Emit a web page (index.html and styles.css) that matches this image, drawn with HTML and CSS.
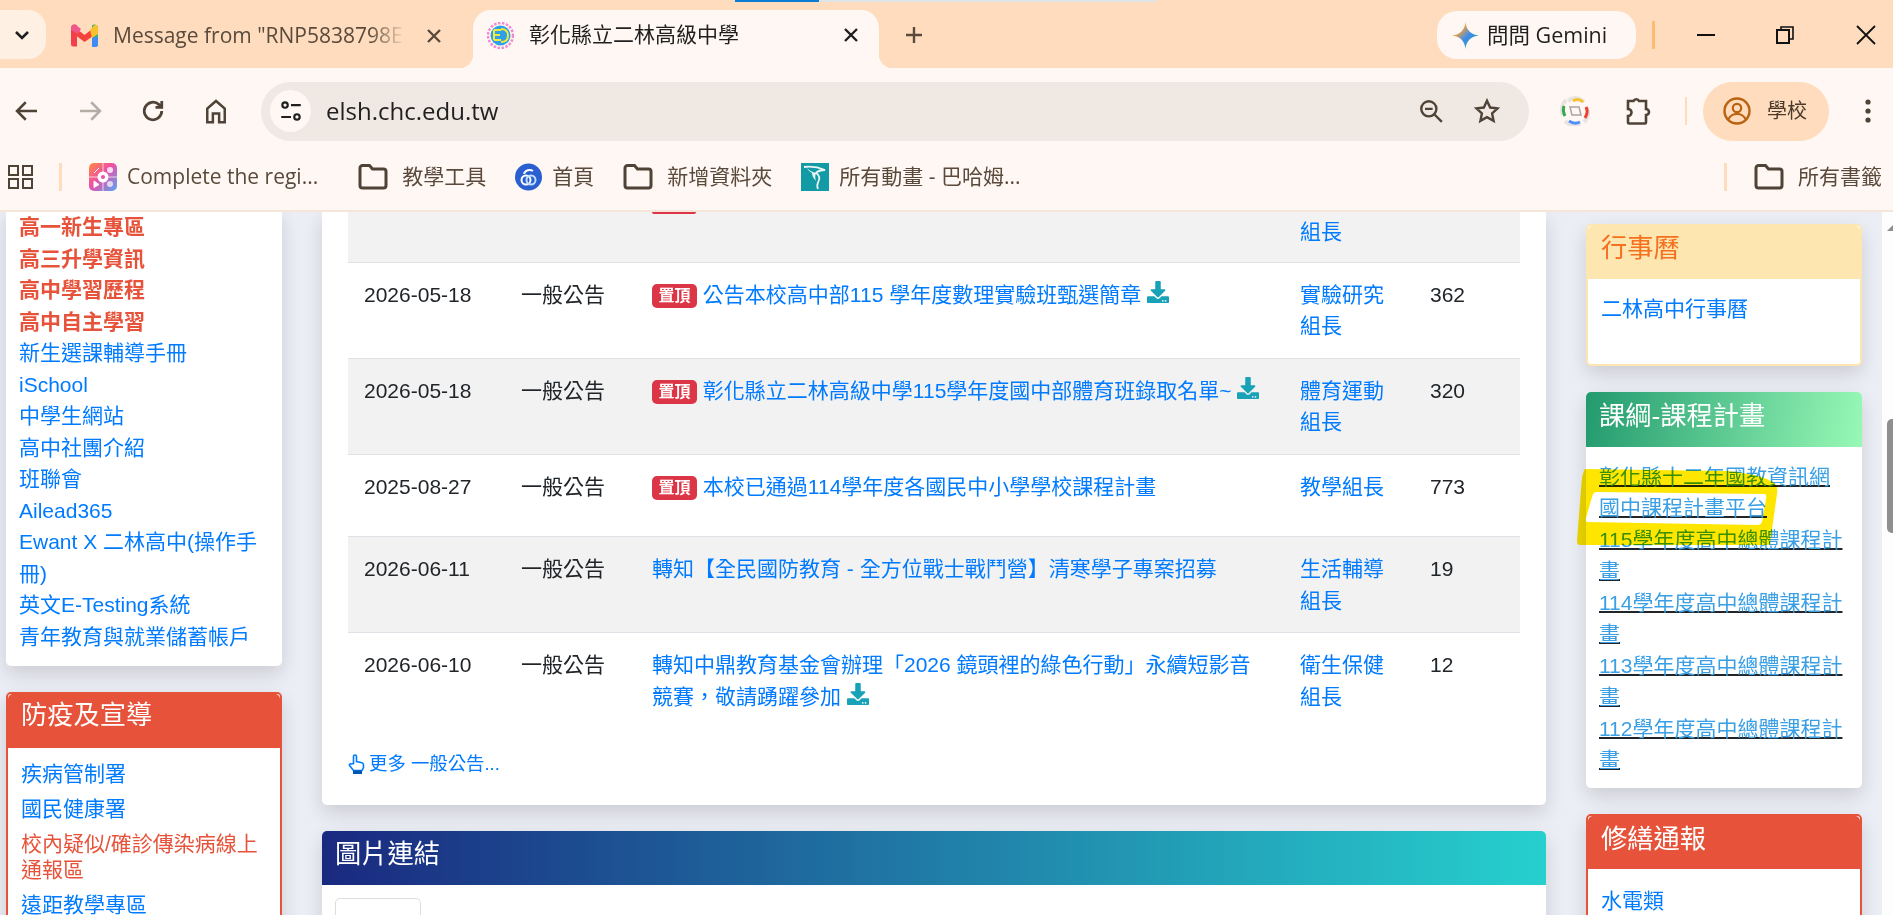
FILE: index.html
```html
<!DOCTYPE html>
<html lang="zh-Hant">
<head>
    <meta charset="UTF-8">
    <title>彰化縣立二林高級中學</title>
    <link rel="stylesheet" href="styles.css">
</head>
<body>
    <svg class="defs" width="0" height="0">
        <defs>
            <symbol id="dl" viewBox="0 0 512 512">
                <path d="M216 0h80c13.3 0 24 10.7 24 24v168h87.7c17.8 0 26.7 21.5 14.1 34.1L269.7 378.3c-7.5 7.5-19.8 7.5-27.3 0L90.1 226.1c-12.6-12.6-3.7-34.1 14.1-34.1H192V24c0-13.3 10.7-24 24-24zm296 376v112c0 13.3-10.7 24-24 24H24c-13.3 0-24-10.7-24-24V376c0-13.3 10.7-24 24-24h146.7l49 49c20.1 20.1 52.5 20.1 72.6 0l49-49H488c13.3 0 24 10.7 24 24zm-124 88c0-11-9-20-20-20s-20 9-20 20 9 20 20 20 20-9 20-20zm64 0c0-11-9-20-20-20s-20 9-20 20 9 20 20 20 20-9 20-20z"/>
            </symbol>
            <symbol id="folder" viewBox="0 0 30 26">
                <path d="M2 4a2.500 2.500 0 0 1 2.500-2.500h7l3 3.500h11a2.500 2.500 0 0 1 2.500 2.500v14a2.500 2.500 0 0 1-2.500 2.500h-21a2.500 2.500 0 0 1-2.500-2.500z" fill="none" stroke="currentColor" stroke-width="3"/>
            </symbol>
            <linearGradient id="gem" x1="0" y1="0" x2="1" y2="1">
                <stop offset="0" stop-color="#e8453c"/>
                <stop offset=".3" stop-color="#f2a03c"/>
                <stop offset=".55" stop-color="#3b8cf0"/>
                <stop offset="1" stop-color="#34a853"/>
            </linearGradient>
            <linearGradient id="cpl" x1="0" y1="0" x2="1" y2="1">
                <stop offset="0" stop-color="#ff8a3c"/>
                <stop offset=".45" stop-color="#ef4fa6"/>
                <stop offset="1" stop-color="#52a8f5"/>
            </linearGradient>
        </defs>
    </svg>

    <div class="capture-strip"><span class="strip-blue"></span><span class="strip-grey"></span></div>

    <header class="chrome">
        <div class="tabstrip">
            <div class="tab-menu">
                <svg width="20" height="20" viewBox="0 0 20 20"><path d="M4 7l6 6 6-6" fill="none" stroke="#1f1f1f" stroke-width="2.600"/></svg>
            </div>
            <div class="tab">
                <svg class="tab-gmail" width="29" height="25" viewBox="0 0 29 25">
                    <path d="M1 5a3.500 3.500 0 0 1 6-2.500v21H3.500A2.500 2.500 0 0 1 1 21z" fill="#f13f4c"/>
                    <path d="M22 2.500A3.500 3.500 0 0 1 28 5v16a2.500 2.500 0 0 1-2.500 2.500H22z" fill="#37b36b"/>
                    <path d="M22 24h3.500a2.500 2.500 0 0 0 2.500-2.500V14h-6z" fill="#3f8cf5"/>
                    <path d="M2 2l12.500 10L27 2l-1 9-11.500 8L4 11z" fill="#f4433c"/>
                    <path d="M20 7l4-4.500c2-1.500 4-.5 4 2.500v6l-6 4z" fill="#fbc02d"/>
                    <path d="M1 5c0-3 2.500-4.500 5-3l5 4-3 5-7-4z" fill="#f0568c"/>
                </svg>
                <span class="tab-title fade">Message from "RNP5838798E</span>
                <svg class="tab-close" width="18" height="18" viewBox="0 0 18 18"><path d="M3 3l12 12M15 3L3 15" stroke="#5a4a3c" stroke-width="2.400"/></svg>
            </div>
            <div class="tab tab-active">
                <svg width="27" height="27" viewBox="0 0 27 27">
                    <circle cx="13.500" cy="13.500" r="12.500" fill="none" stroke="#f08ad0" stroke-width="2.500" stroke-dasharray="2.500 1.500"/>
                    <circle cx="13.500" cy="13.500" r="10" fill="#2f9fe8"/>
                    <path d="M7 8h7M7 13h6M7 18h7M7 8v10M14 7c5 0 7 3 7 6.500S19 20 14 20" fill="none" stroke="#f2ea3a" stroke-width="2"/>
                </svg>
                <span class="tab-title tab-title-active">彰化縣立二林高級中學</span>
                <svg class="tab-close" width="18" height="18" viewBox="0 0 18 18"><path d="M3 3l12 12M15 3L3 15" stroke="#1f1f1f" stroke-width="2.400"/></svg>
            </div>
            <svg class="tab-plus" width="22" height="22" viewBox="0 0 22 22"><path d="M11 3v16M3 11h16" stroke="#5a4a3c" stroke-width="2.400"/></svg>
            <div class="gemini">
                <svg width="27" height="27" viewBox="0 0 24 24"><path d="M12 0C12.500 7 17 11.500 24 12 17 12.500 12.500 17 12 24 11.500 17 7 12.500 0 12 7 11.500 11.500 7 12 0z" fill="url(#gem)"/></svg>
                <span>問問 Gemini</span>
            </div>
            <span class="strip-divider"></span>
            <svg class="win-min" width="18" height="18" viewBox="0 0 18 18"><path d="M0 9h18" stroke="#111" stroke-width="2"/></svg>
            <svg class="win-max" width="18" height="18" viewBox="0 0 18 18"><rect x="1" y="4" width="12" height="13" fill="none" stroke="#111" stroke-width="2"/><path d="M5 4V1h12v12h-4" fill="none" stroke="#111" stroke-width="1.600"/></svg>
            <svg class="win-close" width="20" height="20" viewBox="0 0 20 20"><path d="M1 1l18 18M19 1L1 19" stroke="#111" stroke-width="1.800"/></svg>
        </div>

        <div class="toolbar">
            <div class="nav">
                <svg width="30" height="30" viewBox="0 0 24 24"><path d="M20 12H5M11 5l-7 7 7 7" fill="none" stroke="#4f4337" stroke-width="2"/></svg>
                <svg width="30" height="30" viewBox="0 0 24 24"><path d="M4 12h15M13 5l7 7-7 7" fill="none" stroke="#b5aca5" stroke-width="2"/></svg>
                <svg width="30" height="30" viewBox="0 0 24 24"><path d="M19 12a7 7 0 1 1-2.200-5.100L19 9M19 4v5h-5" fill="none" stroke="#4f4337" stroke-width="2.200"/></svg>
                <svg width="30" height="30" viewBox="0 0 24 24"><path d="M5 21V10l7-6 7 6v11h-4.500v-7h-5v7z" fill="none" stroke="#4f4337" stroke-width="2"/></svg>
            </div>
            <div class="omnibox">
                <span class="site-info">
                    <svg width="26" height="26" viewBox="0 0 24 24"><circle cx="6.500" cy="6.500" r="2.500" fill="none" stroke="#1f1f1f" stroke-width="2"/><path d="M12 6.500h9M3 17.500h9" stroke="#1f1f1f" stroke-width="2"/><circle cx="17.500" cy="17.500" r="2.500" fill="none" stroke="#1f1f1f" stroke-width="2"/></svg>
                </span>
                <span class="url">elsh.chc.edu.tw</span>
                <svg class="omni-zoom" width="26" height="26" viewBox="0 0 24 24"><circle cx="10" cy="10" r="7" fill="none" stroke="#4f4337" stroke-width="2.200"/><path d="M6.500 10h7M15 15l7 7" stroke="#4f4337" stroke-width="2.200"/></svg>
                <svg class="omni-star" width="26" height="26" viewBox="0 0 24 24"><path d="M12 2.500l2.900 6.300 6.900.8-5.100 4.700 1.400 6.800-6.100-3.400-6.100 3.400 1.400-6.800L2.200 9.600l6.900-.8z" fill="none" stroke="#4f4337" stroke-width="2.200"/></svg>
            </div>
            <svg class="ext-wheel" width="30" height="30" viewBox="0 0 30 30">
                <path d="M8 5c5-4 11-4 16 1M27 12c2 5 1 10-3 14M20 28c-5 2-11 1-15-3M3 19C1 14 2 8 6 4" fill="none" stroke="#e6e3e0" stroke-width="4"/>
                <path d="M13 5c3-2 7-2 10 1" fill="none" stroke="#fbc02d" stroke-width="3"/>
                <path d="M26 11c2 4 1 8-1 11" fill="none" stroke="#ea4335" stroke-width="3"/>
                <path d="M20 26c-4 2-8 1-11-1" fill="none" stroke="#4f8ff7" stroke-width="3"/>
                <path d="M5 20c-2-4-2-7-1-10" fill="none" stroke="#34a853" stroke-width="3"/>
                <path d="M10 11h9l2 8H12z" fill="none" stroke="#a9a5a2" stroke-width="1.500"/>
            </svg>
            <svg class="ext-puzzle" width="28" height="30" viewBox="0 0 28 30"><path d="M3 5h5.500a3 3 0 0 1 5.500 0H21v8a3 3 0 0 1 0 6v7.500a1 1 0 0 1-1 1H4a1 1 0 0 1-1-1V20a3.500 3.500 0 0 0 0-7z" fill="none" stroke="#4f4337" stroke-width="2.600"/></svg>
            <span class="tool-divider"></span>
            <div class="profile">
                <svg width="28" height="28" viewBox="0 0 28 28"><circle cx="14" cy="14" r="12.500" fill="none" stroke="#b9620f" stroke-width="2.400"/><circle cx="14" cy="11" r="4.200" fill="none" stroke="#b9620f" stroke-width="2.200"/><path d="M5.500 22c2-4 5-5 8.500-5s6.500 1 8.500 5" fill="none" stroke="#b9620f" stroke-width="2.200"/></svg>
                <span>學校</span>
            </div>
            <svg class="tool-dots" width="6" height="24" viewBox="0 0 6 24"><circle cx="3" cy="3" r="2.600" fill="#4f4337"/><circle cx="3" cy="12" r="2.600" fill="#4f4337"/><circle cx="3" cy="21" r="2.600" fill="#4f4337"/></svg>
        </div>

        <div class="bookmarks">
            <svg class="bm-apps" width="25" height="24" viewBox="0 0 25 24"><path d="M1 1h9v9H1zM15 1h9v9h-9zM1 14h9v9H1zM15 14h9v9h-9z" fill="none" stroke="#4f4337" stroke-width="2"/></svg>
            <span class="bm-divider"></span>
            <a class="bm bm-first">
                <svg width="28" height="28" viewBox="0 0 28 28"><rect width="28" height="28" rx="5" fill="url(#cpl)"/><path d="M14 0v28M0 14h28" stroke="#fff" stroke-opacity=".7"/><circle cx="14" cy="14" r="5.500" fill="#fff"/><circle cx="14" cy="14" r="2" fill="#ef4fa6"/><circle cx="21" cy="7" r="3" fill="#fff" fill-opacity=".8"/><circle cx="21" cy="21" r="3" fill="#fff" fill-opacity=".7"/><path d="M5 10l5-5M5 18l5 3.500-5 3z" stroke="#fff" fill="#fff"/></svg>
                <span>Complete the regi...</span>
            </a>
            <a class="bm">
                <svg class="bm-folder" width="30" height="26"><use href="#folder"/></svg>
                <span>教學工具</span>
            </a>
            <a class="bm">
                <svg width="27" height="28" viewBox="0 0 27 28"><circle cx="13.500" cy="14" r="13.500" fill="#2a5fd0"/><circle cx="11" cy="17" r="4.500" fill="none" stroke="#fff" stroke-width="2"/><circle cx="16" cy="17" r="4.500" fill="none" stroke="#bfe0ff" stroke-width="2"/><path d="M9 11c1-4 6-5 9-3" fill="none" stroke="#fff" stroke-width="2"/></svg>
                <span>首頁</span>
            </a>
            <a class="bm">
                <svg class="bm-folder" width="30" height="26"><use href="#folder"/></svg>
                <span>新增資料夾</span>
            </a>
            <a class="bm">
                <svg width="28" height="28" viewBox="0 0 28 28"><rect width="28" height="28" fill="#129aa5"/><path d="M3 4c7-1 14 0 21 3-5 0-7 1-9 3 3 2 4 4 3 7-1 3-3 5-1 9" fill="none" stroke="#e9f6f5" stroke-width="1.800"/><path d="M6 5c3 3 5 4 9 5-1 3-1 5 0 8-3-3-4-6-4-8-2-1-4-3-5-5z" fill="#e9f6f5"/></svg>
                <span>所有動畫 - 巴哈姆...</span>
            </a>
            <span class="bm-divider bm-divider-end"></span>
            <a class="bm bm-all">
                <svg class="bm-folder" width="30" height="26"><use href="#folder"/></svg>
                <span>所有書籤</span>
            </a>
        </div>
    </header>

    <div class="viewport">
        <div class="page">
            <aside class="col">
                <section class="card card-list">
                    <ul class="link-list">
                        <li><a class="strong">高一新生專區</a></li>
                        <li><a class="strong">高三升學資訊</a></li>
                        <li><a class="strong">高中學習歷程</a></li>
                        <li><a class="strong">高中自主學習</a></li>
                        <li><a>新生選課輔導手冊</a></li>
                        <li><a>iSchool</a></li>
                        <li><a>中學生網站</a></li>
                        <li><a>高中社團介紹</a></li>
                        <li><a>班聯會</a></li>
                        <li><a>Ailead365</a></li>
                        <li><a>Ewant X 二林高中(操作手冊)</a></li>
                        <li><a>英文E-Testing系統</a></li>
                        <li><a>青年教育與就業儲蓄帳戶</a></li>
                    </ul>
                </section>
                <section class="card card-red">
                    <h4 class="card-head">防疫及宣導</h4>
                    <ul class="spaced-list">
                        <li><a>疾病管制署</a></li>
                        <li><a>國民健康署</a></li>
                        <li><a class="alert">校內疑似/確診傳染病線上通報區</a></li>
                        <li><a>遠距教學專區</a></li>
                    </ul>
                </section>
            </aside>

            <main class="main">
                <section class="card card-news">
                    <table class="news">
                        <colgroup>
                            <col class="c-date"><col class="c-type"><col><col class="c-unit"><col class="c-count">
                        </colgroup>
                        <tr class="row-cut">
                            <td></td>
                            <td></td>
                            <td><span class="badge-cut"></span></td>
                            <td><a>組長</a></td>
                            <td></td>
                        </tr>
                        <tr>
                            <td>2026-05-18</td>
                            <td>一般公告</td>
                            <td><p><span class="badge">置頂</span> <a>公告本校高中部115 學年度數理實驗班甄選簡章</a> <svg class="dl"><use href="#dl"/></svg></p></td>
                            <td><a>實驗研究組長</a></td>
                            <td>362</td>
                        </tr>
                        <tr>
                            <td>2026-05-18</td>
                            <td>一般公告</td>
                            <td><p><span class="badge">置頂</span> <a>彰化縣立二林高級中學115學年度國中部體育班錄取名單~</a> <svg class="dl"><use href="#dl"/></svg></p></td>
                            <td><a>體育運動組長</a></td>
                            <td>320</td>
                        </tr>
                        <tr>
                            <td>2025-08-27</td>
                            <td>一般公告</td>
                            <td><p><span class="badge">置頂</span> <a>本校已通過114學年度各國民中小學學校課程計畫</a></p></td>
                            <td><a>教學組長</a></td>
                            <td>773</td>
                        </tr>
                        <tr>
                            <td>2026-06-11</td>
                            <td>一般公告</td>
                            <td><p><a>轉知【全民國防教育 - 全方位戰士戰鬥營】清寒學子專案招募</a></p></td>
                            <td><a>生活輔導組長</a></td>
                            <td>19</td>
                        </tr>
                        <tr>
                            <td>2026-06-10</td>
                            <td>一般公告</td>
                            <td><p><a>轉知中鼎教育基金會辦理「2026 鏡頭裡的綠色行動」永續短影音競賽，敬請踴躍參加</a> <svg class="dl"><use href="#dl"/></svg></p></td>
                            <td><a>衛生保健組長</a></td>
                            <td>12</td>
                        </tr>
                    </table>
                    <a class="more">
                        <svg width="17" height="20" viewBox="0 0 17 20"><path d="M5.500 9.500V2.500a1.500 1.500 0 0 1 3 0V7.500l4.500 1c1.500.3 2.500 1.200 2.500 2.500v2.500l-1.500 3H5.500L1.700 11.800c-.8-1 .2-2.600 1.600-1.800z" fill="none" stroke="currentColor" stroke-width="1.600"/><rect x="5" y="16.500" width="9" height="3.500" fill="#0056b3"/></svg>
                        <span>更多 一般公告...</span>
                    </a>
                </section>
                <section class="card card-images">
                    <h4 class="card-head">圖片連結</h4>
                    <div class="thumb"></div>
                </section>
            </main>

            <aside class="col col-right">
                <section class="card card-cal">
                    <h4 class="card-head">行事曆</h4>
                    <div class="cal-body"><a>二林高中行事曆</a></div>
                </section>
                <section class="card card-plan">
                    <h4 class="card-head">課綱-課程計畫</h4>
                    <ul class="plan-list">
                        <li><a>彰化縣十二年國教資訊網</a></li>
                        <li><a>國中課程計畫平台</a></li>
                        <li><a>115學年度高中總體課程計畫</a></li>
                        <li><a>114學年度高中總體課程計畫</a></li>
                        <li><a>113學年度高中總體課程計畫</a></li>
                        <li><a>112學年度高中總體課程計畫</a></li>
                    </ul>
                    <!-- highlighter mark somebody drew on the screenshot -->
                    <svg class="marker" width="210" height="80" viewBox="0 0 210 80">
                        <path fill-rule="evenodd" d="M8 0L150 2Q190 6 199 16Q201 19 200 25L195 60L193 74Q193 76 190 76L3 76Q0 76 0 72L4 20Q5 3 8 0ZM20 23L188 25Q190 26 189 30L185 53Q184 56 180 56L11 53Q8 53 9 49L15 28Q16 23 20 23Z" fill="#ffe600"/>
                    </svg>
                </section>
                <section class="card card-red card-repair">
                    <h4 class="card-head">修繕通報</h4>
                    <ul class="spaced-list">
                        <li><a>水電類</a></li>
                    </ul>
                </section>
            </aside>
        </div>
        <div class="scrollbar">
            <span class="scroll-up"></span>
            <span class="scroll-thumb"></span>
        </div>
    </div>
</body>
</html>
```
FILE: styles.css
```css
* {
    box-sizing: border-box;
    margin: 0;
    padding: 0;
}

html,
body {
    height: 100%;
    overflow: hidden;
}

body {
    font-family: "Liberation Sans", "Noto Sans CJK TC", sans-serif;
    font-size: 21px;
    line-height: 31.5px;
    color: #212529;
    background-color: #eceef5;
}

.defs {
    position: absolute;
}

ul {
    list-style: none;
}

a {
    color: #007bff;
}

/* browser frame */
.chrome {
    height: 212px;
    font-family: "Open Sans", "Noto Sans CJK TC", sans-serif;
    background-color: #fff7f3;
    border-bottom: 2px solid #f6e6da;
    color: #5a4a3c;
}

.capture-strip {
    position: absolute;
    top: 0;
    left: 735px;
    display: flex;
    height: 2px;
}

.strip-blue {
    width: 84px;
    background-color: #0c7bd4;
}

.strip-grey {
    width: 337px;
    background-color: #dfe4e6;
}

.tabstrip {
    display: flex;
    align-items: flex-start;
    height: 68px;
    padding-top: 10px;
    background-color: #fedcbd;
}

.tab-menu {
    display: flex;
    align-items: center;
    justify-content: center;
    width: 46px;
    height: 49px;
    padding-right: 2px;
    border-radius: 0 18px 18px 0;
    background-color: #fff0e4;
}

.tab {
    display: flex;
    align-items: center;
    height: 49px;
    width: 427px;
    padding: 2px 0 0 24px;
    font-size: 21px;
}

.tab-gmail {
    flex: none;
}

.tab-title {
    margin-left: 14px;
    white-space: nowrap;
    overflow: hidden;
}

.fade {
    width: 292px;
    -webkit-mask-image: linear-gradient(to right, #000 88%, transparent);
    mask-image: linear-gradient(to right, #000 88%, transparent);
}

.tab-close {
    flex: none;
    margin-left: 20px;
}

.tab-active {
    position: relative;
    width: 406px;
    height: 58px;
    padding: 2px 19px 10px 14px;
    border-radius: 18px 18px 0 0;
    background-color: #fff7f3;
    color: #1f1f1f;
}

.tab-active::before,
.tab-active::after {
    content: "";
    position: absolute;
    bottom: 0;
    width: 14px;
    height: 14px;
}

.tab-active::before {
    left: -14px;
    background: radial-gradient(circle at 0 0, #fedcbd 14px, #fff7f3 14.5px);
}

.tab-active::after {
    right: -14px;
    background: radial-gradient(circle at 100% 0, #fedcbd 14px, #fff7f3 14.5px);
}

.tab-title-active {
    margin-left: 15px;
}

.tab-active .tab-close {
    margin-left: auto;
}

.tab-plus {
    margin: 14px 0 0 24px;
}

.gemini {
    display: flex;
    align-items: center;
    gap: 8px;
    width: 199px;
    height: 48px;
    margin: 1px 0 0 auto;
    padding-left: 15px;
    border-radius: 20px;
    background-color: #fff7f3;
    color: #1f1f1f;
    font-size: 21.5px;
}

.strip-divider {
    width: 3px;
    height: 28px;
    margin: 11px 0 0 16px;
    background-color: #fdbd6e;
}

.win-min {
    margin: 16px 0 0 42px;
}

.win-max {
    margin: 16px 0 0 61px;
}

.win-close {
    margin: 15px 17px 0 62px;
}

.toolbar {
    display: flex;
    align-items: center;
    height: 76px;
    padding: 13px 22px 3px 12px;
}

.nav {
    display: flex;
    gap: 33px;
}

.omnibox {
    display: flex;
    flex: 1;
    align-items: center;
    height: 59px;
    margin-left: 30px;
    padding: 0 29px 0 9px;
    border-radius: 30px;
    background-color: #f0e8e3;
}

.site-info {
    display: flex;
    align-items: center;
    justify-content: center;
    width: 41px;
    height: 42px;
    border-radius: 50%;
    background-color: #fff7f3;
}

.url {
    margin-left: 15px;
    color: #1f1f1f;
    font-size: 24px;
}

.omni-zoom {
    margin-left: auto;
}

.omni-star {
    margin-left: 30px;
}

.ext-wheel {
    margin-left: 31px;
}

.ext-puzzle {
    margin-left: 35px;
}

.tool-divider {
    width: 2px;
    height: 28px;
    margin-left: 32px;
    background-color: #fedcbd;
}

.profile {
    display: flex;
    align-items: center;
    gap: 16px;
    width: 126px;
    height: 59px;
    margin-left: 16px;
    padding-left: 20px;
    border-radius: 30px;
    background-color: #fedcbd;
    color: #4a3a2c;
    font-size: 20px;
}

.tool-dots {
    margin-left: 36px;
}

.bookmarks {
    display: flex;
    align-items: center;
    height: 66px;
    padding-left: 8px;
    font-size: 21px;
}

.bm-apps {
    flex: none;
}

.bm-divider {
    width: 3px;
    height: 28px;
    margin: 0 27px 0 26px;
    background-color: #fedcbd;
}

.bm {
    display: flex;
    align-items: center;
    gap: 10px;
    margin-right: 29px;
    color: #5a4a3c;
    white-space: nowrap;
}

.bm-first {
    margin-right: 40px;
}

.bm-folder {
    color: #4f4337;
    margin-right: 4px;
}

.bm-divider-end {
    margin: 0 27px 0 auto;
}

.bm-all {
    margin-right: 11px;
}

/* page */
.viewport {
    display: flex;
    height: 703px;
    overflow: hidden;
}

.page {
    display: flex;
    align-items: flex-start;
    gap: 40px;
    flex: 1;
    padding-left: 6px;
}

.col {
    flex: none;
    width: 276px;
}

.col-right {
    padding-top: 12px;
}

.main {
    flex: none;
    width: 1224px;
}

.card {
    position: relative;
    margin-bottom: 26px;
    border-radius: 5px;
    background-color: #fff;
    box-shadow: 0 8px 20px rgba(0, 0, 0, 0.14);
}

.card-head {
    padding: 8px 13px 16px;
    font-size: 26.25px;
    font-weight: 400;
    line-height: 31.5px;
    border-radius: 5px 5px 0 0;
}

/* left list */
.card-list {
    padding: 0 13px 14px;
    border-radius: 0 0 5px 5px;
}

.link-list {
    margin-top: -1px;
}

.strong {
    color: #e7533a;
    font-weight: 700;
}

.alert {
    color: #e7533a;
}

.card-red {
    border: 2px solid #e7533a;
}

.card-red .card-head {
    padding-top: 6px;
    color: #fff;
    background-color: #e7533a;
}

.spaced-list {
    padding: 9px 13px 8px;
    line-height: 26px;
}

.spaced-list li {
    padding: 4.5px 0;
}

.card-repair .card-head {
    padding: 8px 13px 14px;
}

.card-repair .spaced-list {
    padding-top: 14px;
}

/* announcements */
.card-news {
    padding: 0 26px 28px;
    border-radius: 0 0 5px 5px;
}

.news {
    width: 100%;
    border-collapse: collapse;
    table-layout: fixed;
}

.c-date {
    width: 157px;
}

.c-type {
    width: 131px;
}

.c-unit {
    width: 130px;
}

.c-count {
    width: 106px;
}

.news td {
    padding: 16px;
    vertical-align: top;
    border-top: 1px solid #dee2e6;
}

.news tr:nth-child(odd) {
    background-color: #f2f2f2;
}

.news p {
    margin-bottom: 18px;
}

.news .row-cut td {
    padding: 4px 16px 14px;
    border-top: 0;
}

.row-cut td:last-child {
    height: 50px;
}

.badge-cut {
    display: block;
    width: 44px;
    height: 2px;
    margin-top: -4px;
    border-radius: 0 0 4px 4px;
    background-color: #dc3545;
}

.badge {
    display: inline-block;
    padding: 4px 6.5px;
    border-radius: 5px;
    color: #fff;
    background-color: #dc3545;
    font-size: 16px;
    font-weight: 700;
    line-height: 16px;
    vertical-align: 1px;
}

.dl {
    width: 22px;
    height: 22px;
    fill: #17a2b8;
    vertical-align: -1px;
}

.more {
    display: flex;
    align-items: center;
    gap: 4px;
    margin-top: 4px;
    font-size: 18.4px;
    line-height: 27px;
}

/* image links */
.card-images {
    padding-bottom: 40px;
}

.card-images .card-head {
    padding-bottom: 14.5px;
    color: #fff;
    background: linear-gradient(to right, #1a2980, #26d0ce);
}

.thumb {
    width: 86px;
    height: 120px;
    margin: 13px 0 0 13px;
    border: 1px solid #ddd;
    border-radius: 5px;
}

/* right column */
.card-cal {
    border: 2px solid #fde6b0;
}

.card-cal .card-head {
    padding: 7px 13px 14px;
    color: #f5701f;
    background-color: #fde6b0;
}

.cal-body {
    padding: 14px 13px 40px;
}

.card-plan .card-head {
    padding: 9px 13px 14px;
    color: #fff;
    background: linear-gradient(100deg, #229a6e, #98f9b6);
}

.plan-list {
    padding: 14px 13px 12px;
}

.plan-list a {
    color: #3a9fe4;
    text-decoration: underline 2px #212529;
}

.marker {
    position: absolute;
    top: 77px;
    left: -9px;
    mix-blend-mode: multiply;
}

/* scrollbar */
.scrollbar {
    position: relative;
    flex: none;
    width: 11px;
    background-color: #fdfdfd;
}

.scroll-up {
    position: absolute;
    top: 13px;
    right: 0;
    border-left: 6px solid transparent;
    border-bottom: 6px solid #8f8f8f;
}

.scroll-thumb {
    position: absolute;
    top: 207px;
    right: 0;
    width: 6px;
    height: 114px;
    border-radius: 5px 0 0 5px;
    background-color: #8f8f8f;
}
```
